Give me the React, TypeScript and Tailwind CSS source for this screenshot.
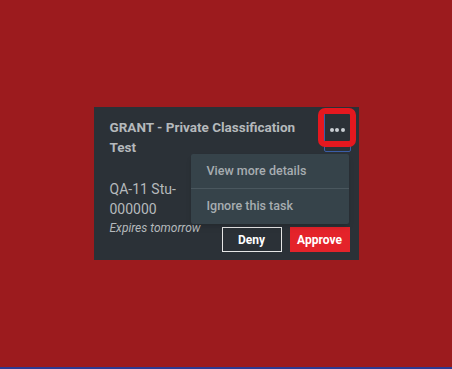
import React from 'react';

interface MenuItem {
  id: string;
  label: string;
}

const menuItems: MenuItem[] = [
  { id: 'details', label: 'View more details' },
  { id: 'ignore', label: 'Ignore this task' },
];

// Three dot trigger, with the red highlight ring drawn over it
const MoreButton: React.FC = () => (
  <>
    <button className="absolute left-[230px] top-[5px] flex h-[40px] w-[27px] items-start justify-center rounded-[2px] border-[1.5px] border-[#3b5ea8] bg-[#2b3137] pt-[15px]">
      <span className="flex gap-[1.5px]">
        <span className="h-[4px] w-[4px] rounded-full bg-[#c9ced2]" />
        <span className="h-[4px] w-[4px] rounded-full bg-[#c9ced2]" />
        <span className="h-[4px] w-[4px] rounded-full bg-[#c9ced2]" />
      </span>
    </button>
    <div className="pointer-events-none absolute left-[224px] top-[1px] h-[39px] w-[38px] rounded-[7px] border-[6px] border-[#e5181f]" />
  </>
);

const ActionMenu: React.FC = () => (
  <div className="absolute left-[97px] top-[47px] w-[158px] rounded-[2px] bg-[#36434a] shadow-md">
    {menuItems.map((item, i) => (
      <div
        key={item.id}
        className={`flex h-[34px] items-center pl-[16px] text-[12.5px] font-medium text-[#a7adb1] ${
          i > 0 ? 'h-[36px] border-t border-[#4a575e]' : ''
        }`}
      >
        {item.label}
      </div>
    ))}
  </div>
);

export default function App() {
  return (
    <div
      className="flex h-[369px] w-[452px] items-center justify-center border-b-[2px] border-[#2c3a92] bg-[#9c1b1e]"
      style={{ fontFamily: 'Roboto, "Liberation Sans", sans-serif' }}
    >
      <div className="relative h-[153px] w-[265px] bg-[#2b3137] pl-[16px] pr-[9px] pt-[10px]">
        <div className="w-[195px] text-[13.5px] font-bold leading-[20px] text-[#b5b9bc]">
          GRANT - Private Classification Test
        </div>
        <div className="mt-[22px] flex items-start justify-between">
          <div className="w-[96px] text-[#b5b9bc]">
            <div className="text-[14px] leading-[20px]">QA-11 Stu-000000</div>
            <div className="text-[12px] italic leading-[19px]">Expires tomorrow</div>
          </div>
          <div className="mt-[48px] flex gap-[8px]">
            <button className="h-[25px] w-[60px] border border-[#e6e6e6] text-[12px] font-bold text-white">
              Deny
            </button>
            <button className="h-[25px] w-[60px] bg-[#e4232a] text-[12px] font-bold text-white">
              Approve
            </button>
          </div>
        </div>
        <MoreButton />
        <ActionMenu />
      </div>
    </div>
  );
}
